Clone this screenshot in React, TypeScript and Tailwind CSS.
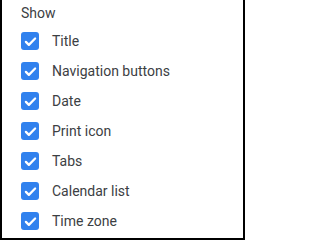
const ITEMS = ['Title', 'Navigation buttons', 'Date', 'Print icon', 'Tabs', 'Calendar list', 'Time zone']

function CheckBox() {
  return (
    <span className="flex h-[18px] w-[18px] items-center justify-center rounded-[3px] bg-[#3081ee]">
      <svg viewBox="0 0 24 24" className="h-[17px] w-[17px]" fill="none" stroke="white" strokeWidth="3.2" strokeLinecap="round" strokeLinejoin="round">
        <path d="M5.5 12.5l4.2 4.2 8.8-8.9" />
      </svg>
    </span>
  )
}

export default function App() {
  return (
    <div
      className="h-[240px] w-[245px] border-x-2 border-b-2 border-black bg-white pl-[19px] text-[#3c4043]"
      style={{ fontFamily: 'Roboto, "Liberation Sans", sans-serif' }}
    >
      <div className="pt-[4px] text-[14px] leading-[18px]">Show</div>
      <ul className="mt-[4px]">
        {ITEMS.map((item) => (
          <li key={item} className="flex h-[30px] items-center gap-[13px]">
            <CheckBox />
            <span className="text-[14px]">{item}</span>
          </li>
        ))}
      </ul>
    </div>
  )
}
